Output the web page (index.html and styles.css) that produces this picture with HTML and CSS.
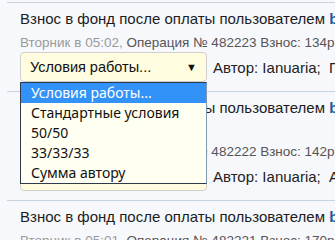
FILE: index.html
```
<!DOCTYPE html>
<html lang="ru">
<head>
<meta charset="utf-8">
<title>Взносы</title>
<link rel="stylesheet" href="styles.css">
</head>
<body>
<div class="feed">
  <div class="item">
    <div class="title">Взнос в фонд после оплаты пользователем <a class="user" href="#">bazilio</a> (заказ № 16234)</div>
    <div class="meta"><span class="date">Вторник в 05:02,</span> Операция № 482223 Взнос: 134р. Остаток: 2150р.</div>
    <div class="row">
      <div class="select-wrap">
        <div class="select"><span>Условия работы...</span><span class="arrow">▼</span></div>
        <ul class="listbox">
          <li class="opt active">Условия работы...</li>
          <li class="opt">Стандартные условия</li>
          <li class="opt">50/50</li>
          <li class="opt">33/33/33</li>
          <li class="opt">Сумма автору</li>
        </ul>
      </div>
      <div class="author">Автор: Ianuaria; &nbsp;Процент: 50%</div>
    </div>
  </div>
  <div class="item">
    <div class="title">Взнос в фонд после оплаты пользователем <a class="user" href="#">bukvoed_2016</a> по заказу «Курсовая работа по экономике»</div>
    <div class="meta"><span class="date">Вторник в 05:02,</span> Операция № 482222 Взнос: 142р. Остаток: 2016р.</div>
    <div class="row">
      <div class="select-wrap">
        <div class="select"><span>Условия работы...</span><span class="arrow">▼</span></div>
      </div>
      <div class="author">Автор: Ianuaria; &nbsp;Агент: Marta</div>
    </div>
  </div>
  <div class="item">
    <div class="title">Взнос в фонд после оплаты пользователем <a class="user" href="#">belka</a> (заказ № 16230)</div>
    <div class="meta"><span class="date">Вторник в 05:01,</span> Операция № 482221 Взнос: 170р. Остаток: 1874р.</div>
  </div>
</div>
</body>
</html>
```
FILE: styles.css
```
html, body {
  margin: 0;
  padding: 0;
  background: #f6f8fc;
  overflow: hidden;
}
body {
  font-family: "Liberation Sans", Arial, sans-serif;
  color: #222;
}
.feed {
  width: 600px;
  margin-left: 7px;
  padding-top: 2px;
}
.item {
  border-top: 1px solid #c7d5e3;
  padding: 6px 0 9px 13px;
}
.title {
  font-size: 15px;
  line-height: 20px;
  color: #1c1c1c;
}
.user {
  color: #1d5b9c;
  font-weight: bold;
  text-decoration: none;
}
.meta {
  margin-top: 5px;
  font-size: 13.5px;
  line-height: 18px;
  color: #555;
  white-space: nowrap;
}
.date {
  color: #9a9a9a;
}
.row {
  display: flex;
  align-items: center;
  gap: 6px;
}
.select-wrap {
  position: relative;
  width: 187px;
  flex: none;
}
.select {
  box-sizing: border-box;
  height: 30px;
  display: flex;
  align-items: center;
  justify-content: space-between;
  padding: 0 9px 0 9px;
  border: 1px solid #cfcfcf;
  border-radius: 4px;
  background: #fffce0;
  font-size: 14.5px;
  color: #111;
}
.arrow {
  font-size: 11px;
  color: #111;
}
.listbox {
  position: absolute;
  top: 100%;
  left: 0;
  z-index: 5;
  box-sizing: border-box;
  width: 187px;
  margin: 0;
  padding: 0;
  list-style: none;
  background: #fffff2;
  border: 1px solid #2f3a48;
  border-right-color: #7f98b6;
  font-family: "Noto Sans", "DejaVu Sans", sans-serif;
  font-size: 14px;
  color: #111;
}
.opt {
  height: 20px;
  line-height: 20px;
  padding-left: 10px;
  white-space: nowrap;
}
.opt.active {
  background: #3392f7;
  color: #fff;
}
.author {
  font-size: 15px;
  color: #222;
  white-space: nowrap;
}
```
